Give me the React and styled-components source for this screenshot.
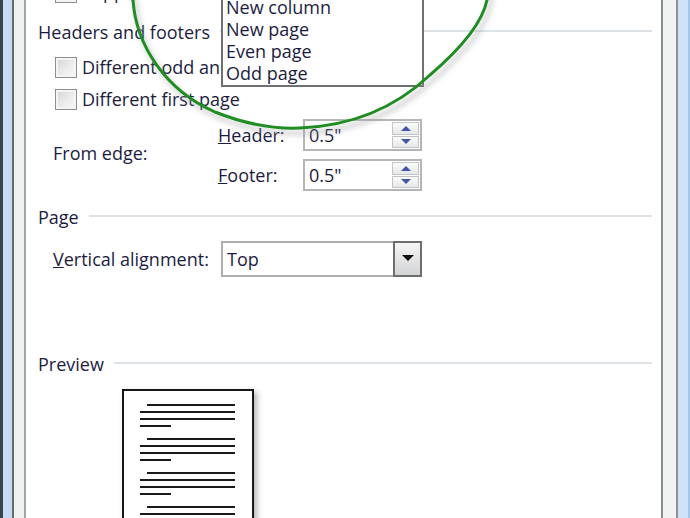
import React from 'react'
import styled, { createGlobalStyle } from 'styled-components'

const GlobalStyle = createGlobalStyle`
  html, body {
    margin: 0;
    padding: 0;
    height: 518px;
    overflow: hidden;
    background: #ffffff;
  }
  body {
    font-family: "Open Sans", "Noto Sans", sans-serif;
    font-size: 18px;
    color: #1c1c40;
  }
`

const paragraphs = [0, 1, 2, 3, 4]
const listItems = ['New column', 'New page', 'Even page', 'Odd page']

// hand-drawn highlight loop, open at the top edge of the shot
const loop =
  'M 131 -20 C 131 -8, 131 0, 133 0 C 136 45, 165 90, 215 112 C 245 124, 275 129, 300 128 ' +
  'C 350 126, 395 108, 430 75 C 465 45, 483 20, 487 0 C 489 -8, 489 -14, 489 -20'

function App() {
  return (
    <Screen>
      <GlobalStyle />
      <LeftFrame />
      <Panel>
        <Flow>
          <CheckRow>
            <CheckBox />
            <span>Suppress endnotes</span>
          </CheckRow>

          <Heading h={48}>Headers and footers</Heading>
          <Indent>
            <CheckRow>
              <CheckBox />
              <span>Different odd and even</span>
            </CheckRow>
            <CheckRow spaced>
              <CheckBox />
              <span>Different first page</span>
            </CheckRow>
          </Indent>

          <EdgeGrid>
            <EdgeLabel>From edge:</EdgeLabel>
            <Label><u>H</u>eader:</Label>
            <SpinBox>
              <SpinText>0.5"</SpinText>
              <SpinButtons>
                <SpinButton><Arrow up /></SpinButton>
                <SpinButton><Arrow /></SpinButton>
              </SpinButtons>
            </SpinBox>
            <Label><u>F</u>ooter:</Label>
            <SpinBox>
              <SpinText>0.5"</SpinText>
              <SpinButtons>
                <SpinButton><Arrow up /></SpinButton>
                <SpinButton><Arrow /></SpinButton>
              </SpinButtons>
            </SpinBox>
          </EdgeGrid>

          <Heading h={30} top={11}>Page</Heading>
          <AlignRow>
            <span><u>V</u>ertical alignment:</span>
            <Select>
              <SelectText>Top</SelectText>
              <DropButton>
                <DropArrow />
              </DropButton>
            </Select>
          </AlignRow>

          <Heading h={30} top={72}>Preview</Heading>
          <PreviewPage>
            {paragraphs.map((p) => (
              <Paragraph key={p}>
                <TextLine size="first" />
                <TextLine />
                <TextLine />
                <TextLine size="last" />
              </Paragraph>
            ))}
          </PreviewPage>
        </Flow>

        <ListPopup>
          <ListItem />
          {listItems.map((item) => (
            <ListItem key={item}>{item}</ListItem>
          ))}
        </ListPopup>
      </Panel>
      <RightFrame />

      <Annotation viewBox="0 0 690 518">
        <defs>
          <filter id="soft" x="-20%" y="-20%" width="140%" height="140%">
            <feGaussianBlur stdDeviation="2.5" />
          </filter>
        </defs>
        <path d={loop} transform="translate(3 5)" fill="none" stroke="#a0a0a0" strokeOpacity="0.35" strokeWidth="6" filter="url(#soft)" />
        <path d={loop} fill="none" stroke="#1f8d22" strokeWidth="3" />
      </Annotation>
    </Screen>
  )
}

export default App

const Screen = styled.div`
  position: relative;
  display: flex;
  width: 690px;
  height: 518px;
  overflow: hidden;
`

const LeftFrame = styled.div`
  width: 26px;
  flex-shrink: 0;
  background: linear-gradient(
    to right,
    #38444c 0 3px,
    #c6dcf2 3px 12px,
    #666b70 12px 14px,
    #eff0f0 14px 24px,
    #a2a4a6 24px 26px
  );
`

const RightFrame = styled.div`
  width: 29px;
  flex-shrink: 0;
  background: linear-gradient(
    to right,
    #8a8c8e 0 2px,
    #f1f2f2 2px 15px,
    #8e9194 15px 17px,
    #cde2f7 17px 27px,
    #a6c6e8 27px 29px
  );
`

const Panel = styled.div`
  position: relative;
  flex: 1;
  background: #ffffff;
  padding: 0 9px 0 12px;
`

const Flow = styled.div`
  display: flex;
  flex-direction: column;
  align-items: stretch;
  margin-top: -24px;
`

const Heading = styled.div`
  display: flex;
  align-items: center;
  gap: 10px;
  height: ${(p) => p.h}px;
  margin-top: ${(p) => p.top || 0}px;
  white-space: nowrap;

  &::after {
    content: '';
    flex: 1;
    height: 2px;
    margin-top: -2px;
    background: #dce2e6;
  }
`

const Indent = styled.div`
  display: flex;
  flex-direction: column;
  padding-left: 17px;
`

const CheckRow = styled.div`
  display: flex;
  align-items: center;
  gap: 5px;
  height: ${(p) => (p.spaced ? 22 : 32)}px;
  margin-top: ${(p) => (p.spaced ? 10 : 0)}px;
  padding-left: ${(p) => (p.spaced ? 0 : 17)}px;
  white-space: nowrap;

  ${Indent} & {
    height: 22px;
    padding-left: 0;
  }
`

const CheckBox = styled.span`
  width: 22px;
  height: 21px;
  box-sizing: border-box;
  border: 1px solid #8e8f90;
  background: linear-gradient(135deg, #d3d3d3 0%, #eeeeee 60%, #f8f8f8 100%);
  box-shadow: inset 0 0 0 2px #f4f4f4;
  flex-shrink: 0;
`

const EdgeGrid = styled.div`
  display: grid;
  grid-template-columns: 165px 85px 119px;
  grid-template-rows: 32px 32px;
  row-gap: 8px;
  align-items: center;
  margin-top: 9px;
  padding-left: 15px;
  white-space: nowrap;
`

const EdgeLabel = styled.span`
  grid-row: 1 / span 2;
  margin-top: -4px;
`

const Label = styled.span`
  grid-column: 2;
`

const SpinBox = styled.div`
  grid-column: 3;
  display: flex;
  height: 32px;
  box-sizing: border-box;
  border: 2px solid #b4b6b8;
  background: #ffffff;
`

const SpinText = styled.span`
  flex: 1;
  display: flex;
  align-items: center;
  padding-left: 4px;
`

const SpinButtons = styled.div`
  width: 27px;
  display: flex;
  flex-direction: column;
  gap: 1px;
  padding: 1px 1px 1px 0;
`

const SpinButton = styled.div`
  flex: 1;
  display: flex;
  align-items: center;
  justify-content: center;
  border: 1px solid #c2c4c6;
  background: linear-gradient(#fbfbfb, #e6e8ea);
`

const Arrow = styled.span`
  width: 0;
  height: 0;
  border-left: 5px solid transparent;
  border-right: 5px solid transparent;
  ${(p) =>
    p.up ? 'border-bottom: 5px solid #3f55a8;' : 'border-top: 5px solid #3f55a8;'}
`

const AlignRow = styled.div`
  display: grid;
  grid-template-columns: 168px 201px;
  align-items: center;
  margin-top: 9px;
  padding-left: 15px;
  white-space: nowrap;
`

const Select = styled.div`
  display: flex;
  height: 36px;
  box-sizing: border-box;
  border: 2px solid #acaeb0;
  border-right: none;
`

const SelectText = styled.span`
  flex: 1;
  display: flex;
  align-items: center;
  padding-left: 4px;
`

const DropButton = styled.div`
  width: 29px;
  margin: -2px 0;
  box-sizing: border-box;
  border: 2px solid #6c6e70;
  background: linear-gradient(#f6f6f6, #d2d3d4);
  display: flex;
  align-items: center;
  justify-content: center;
`

const DropArrow = styled.span`
  width: 0;
  height: 0;
  border-left: 6px solid transparent;
  border-right: 6px solid transparent;
  border-top: 6px solid #111111;
  margin-top: -2px;
`

const PreviewPage = styled.div`
  align-self: flex-start;
  width: 132px;
  height: 220px;
  margin: 10px 0 0 84px;
  box-sizing: border-box;
  border: 2px solid #161616;
  background: #ffffff;
  box-shadow: 3px 3px 6px rgba(0, 0, 0, 0.3);
  padding: 13px 17px 0 16px;
  display: flex;
  flex-direction: column;
  gap: 11px;
`

const Paragraph = styled.div`
  display: flex;
  flex-direction: column;
  gap: 5px;
`

const TextLine = styled.span`
  height: 2px;
  background: #1a1a1a;
  width: ${(p) => (p.size === 'first' ? 88 : p.size === 'last' ? 31 : 95)}px;
  margin-left: ${(p) => (p.size === 'first' ? 7 : 0)}px;
`

const ListPopup = styled.div`
  position: absolute;
  left: 195px;
  top: -28px;
  width: 203px;
  box-sizing: border-box;
  border: 2px solid #6e7072;
  background: #ffffff;
  padding-bottom: 1px;
`

const ListItem = styled.div`
  height: 22px;
  line-height: 22px;
  padding-left: 3px;
  white-space: nowrap;
`

const Annotation = styled.svg`
  position: absolute;
  left: 0;
  top: 0;
  width: 690px;
  height: 518px;
  pointer-events: none;
`
